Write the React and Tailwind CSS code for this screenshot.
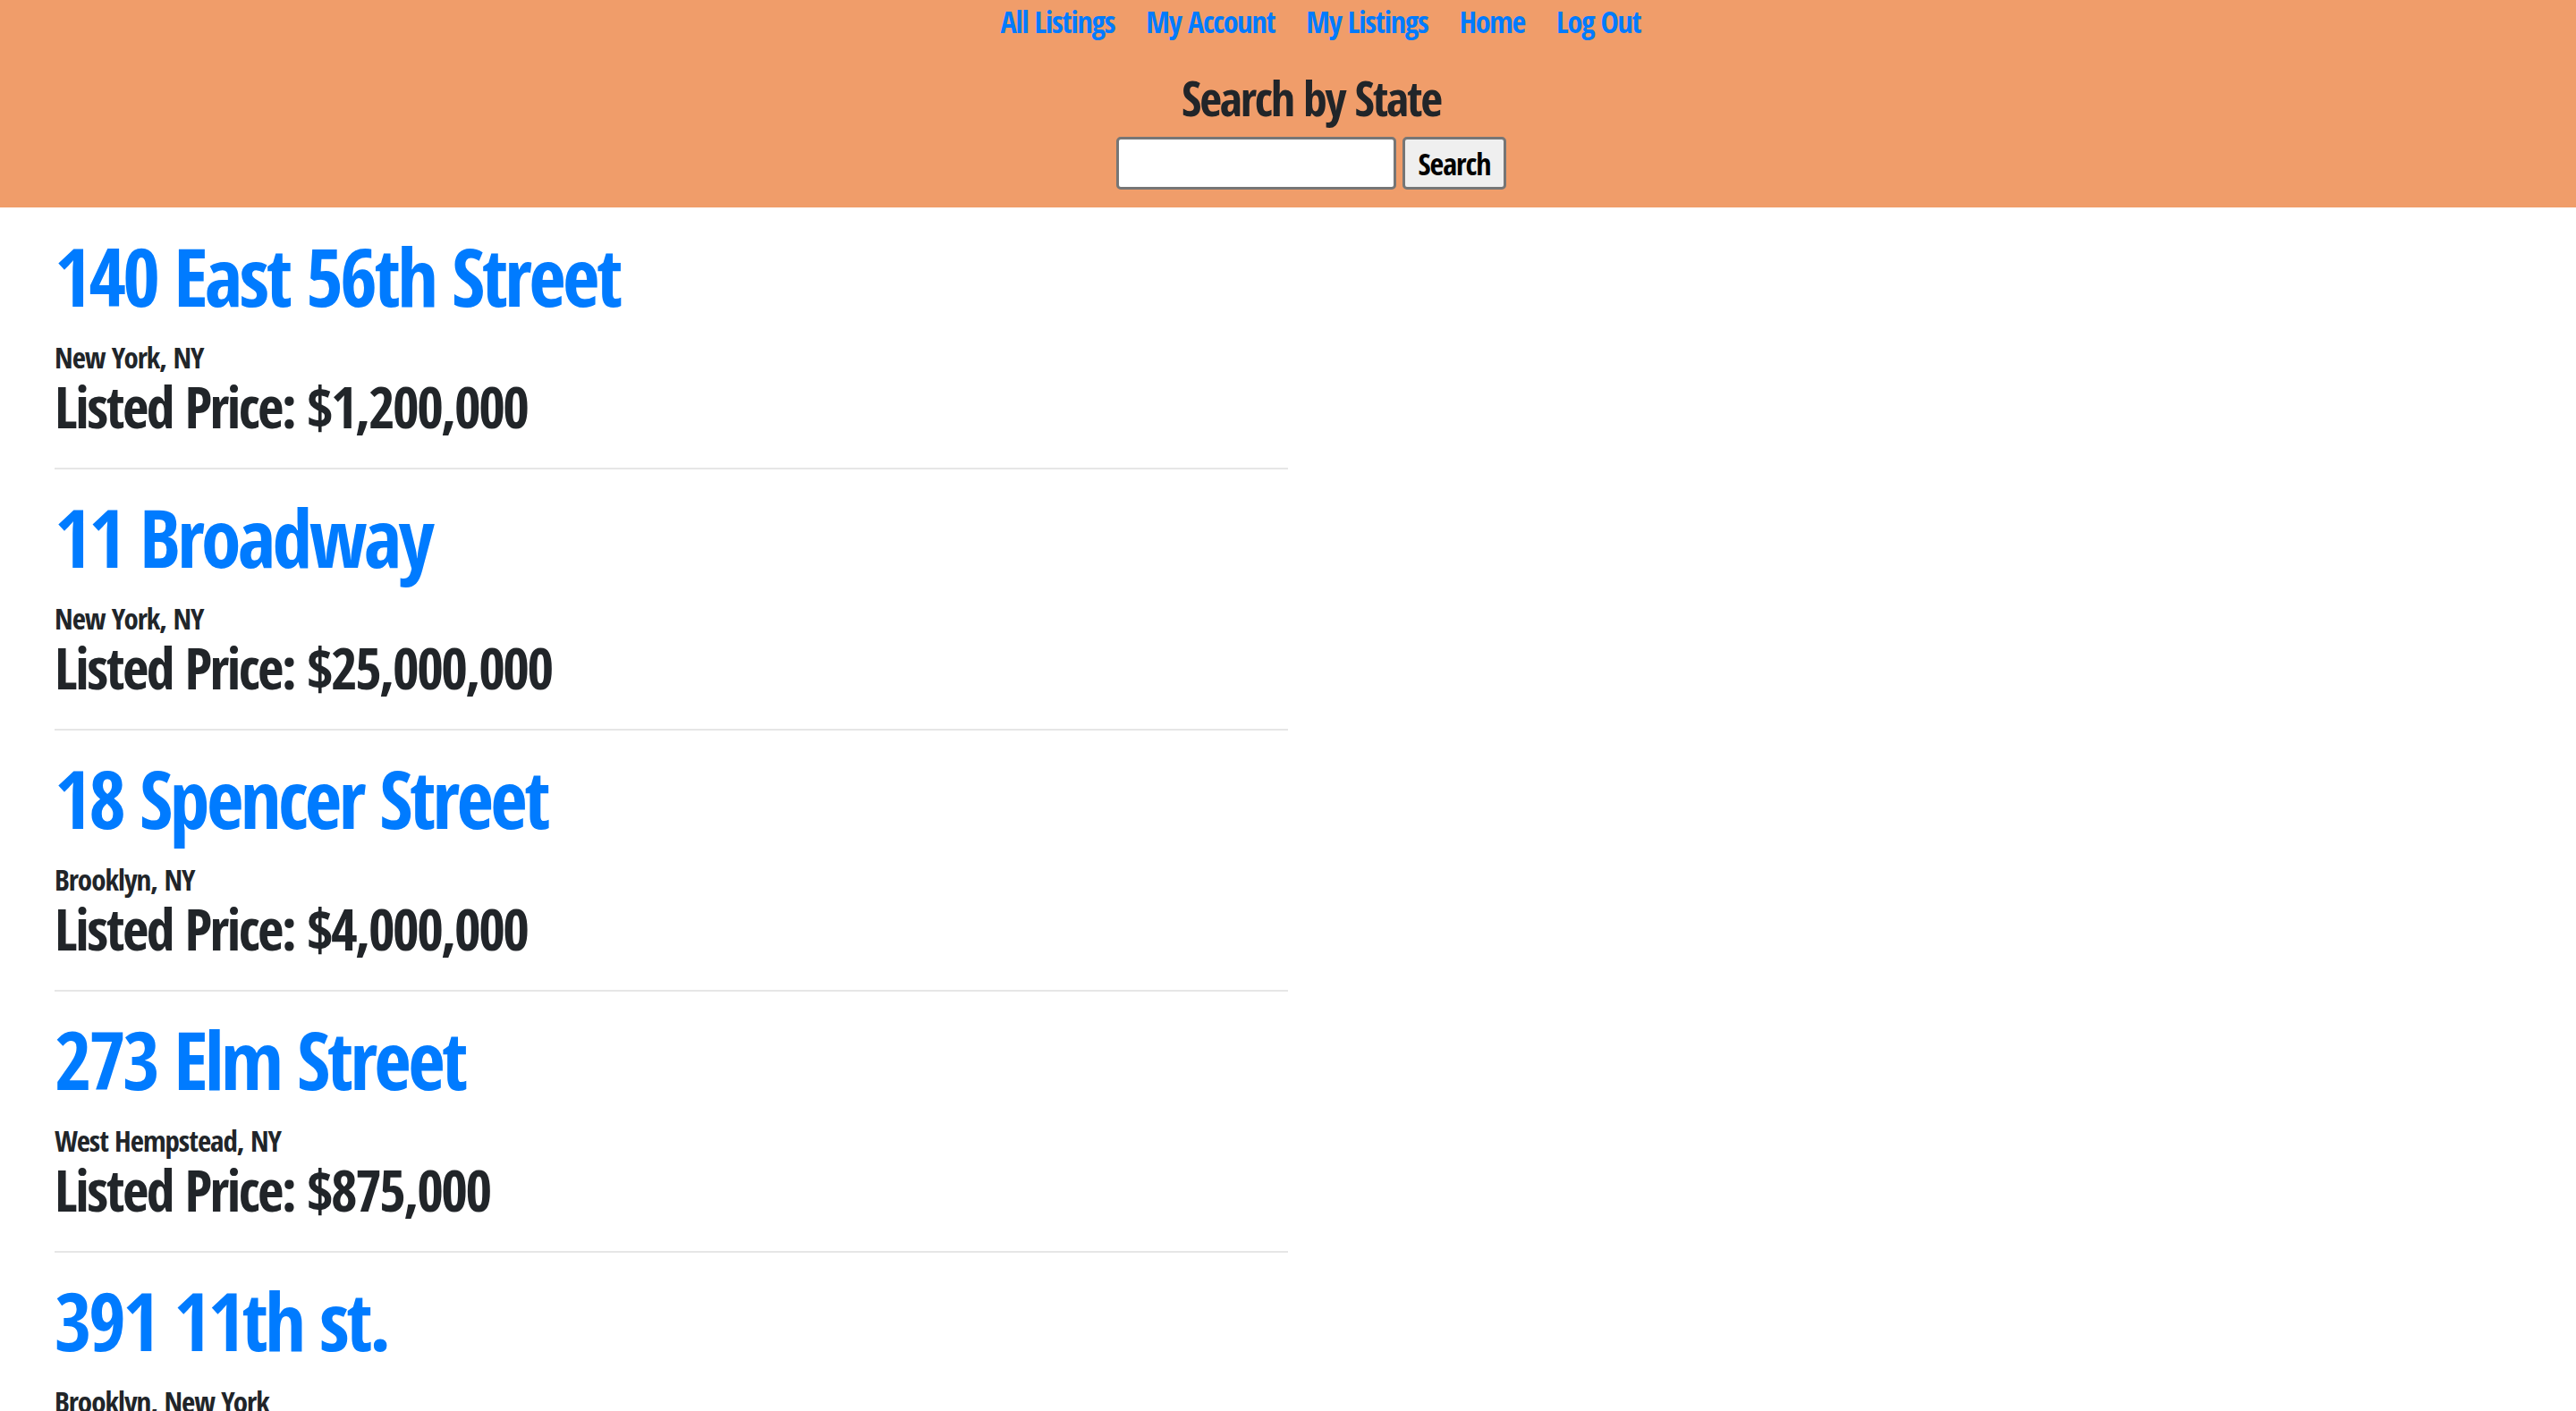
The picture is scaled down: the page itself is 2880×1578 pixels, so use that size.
const links = ['All Listings', 'My Account', 'My Listings', 'Home', 'Log Out'];

const listings = [
  { address: '140 East 56th Street', city: 'New York, NY', price: '$1,200,000' },
  { address: '11 Broadway', city: 'New York, NY', price: '$25,000,000' },
  { address: '18 Spencer Street', city: 'Brooklyn, NY', price: '$4,000,000' },
  { address: '273 Elm Street', city: 'West Hempstead, NY', price: '$875,000' },
  { address: '391 11th st.', city: 'Brooklyn, New York', price: '$650,000' },
];

function Header() {
  return (
    <div className="bg-[#f09d6a] pb-[20px]">
      <ul className="flex justify-center gap-[35px] pl-[73px] pt-[1px]">
        {links.map((l) => (
          <li key={l}>
            <a className="block text-[34px] leading-[46px] tracking-[-1.2px] text-[#007bff]">{l}</a>
          </li>
        ))}
      </ul>
      <div className="flex flex-col items-center pl-[52px]">
        <h4 className="mt-[32px] text-[54px] leading-[60px] tracking-[-2.2px] text-[#212529]">Search by State</h4>
        <div className="mt-[14px] flex gap-[7px]">
          <input className="h-[59px] w-[313px] rounded-[5px] border-[3px] border-[#767676] bg-white" />
          <button className="h-[59px] w-[116px] rounded-[5px] border-[3px] border-[#767676] bg-[#efefef] text-[34px] leading-none tracking-[-1px] text-black">
            Search
          </button>
        </div>
      </div>
    </div>
  );
}

function Listing({ item }) {
  return (
    <div>
      <h1 className="text-[90px] leading-[100px] tracking-[-3.5px] text-[#007bff]">{item.address}</h1>
      <p className="mt-[22px] text-[33px] leading-[40px] tracking-[-1px]">{item.city}</p>
      <h3 className="text-[64px] leading-[70px] tracking-[-2.5px]">Listed Price: {item.price}</h3>
      <hr className="mt-[33px] mb-[25px] w-[1379px] border-t-[2px] border-[#e6e6e6]" />
    </div>
  );
}

export default function App() {
  return (
    <div className="min-h-screen bg-white font-['Open_Sans_Condensed','Open_Sans',sans-serif] font-bold text-[#212529]">
      <Header />
      <div className="pl-[61px] pt-[26px]">
        {listings.map((item) => (
          <Listing key={item.address} item={item} />
        ))}
      </div>
    </div>
  );
}
